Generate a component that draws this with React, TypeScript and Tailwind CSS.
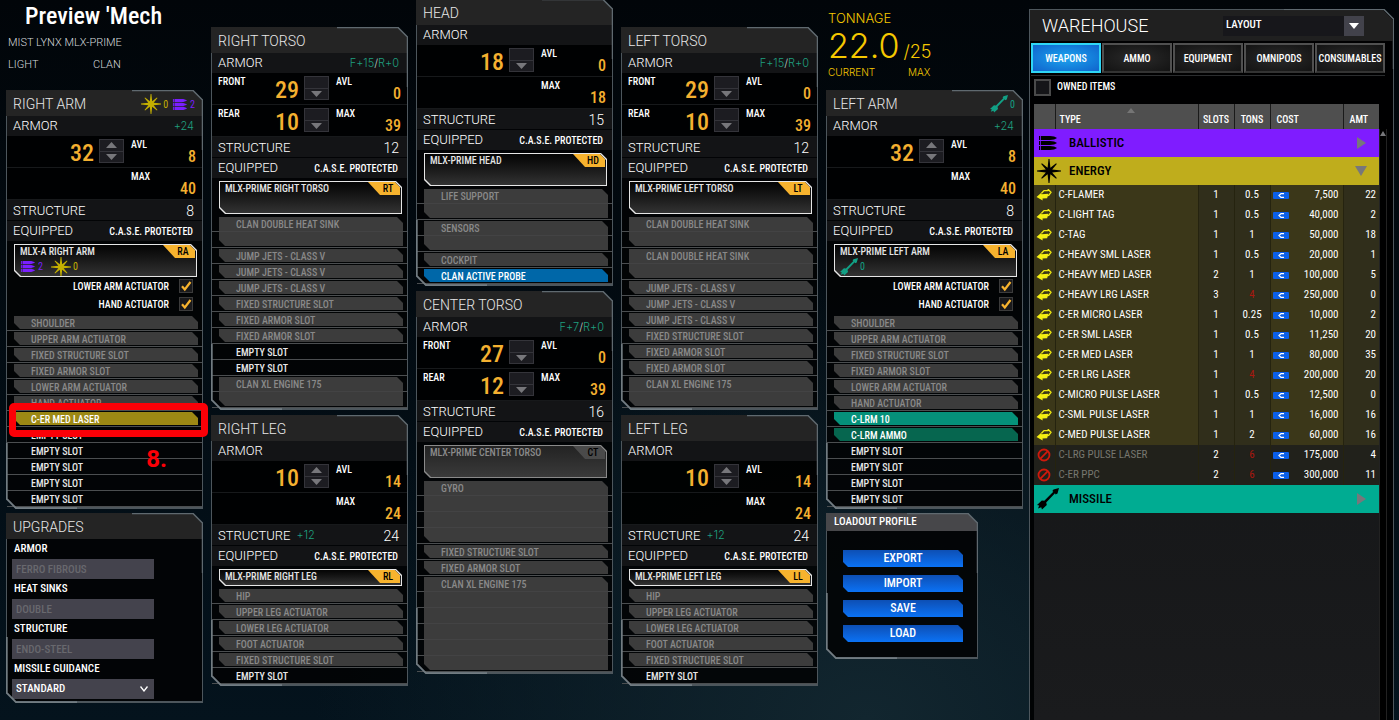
import type { ReactNode } from "react"
import clsx from "clsx"

type Hardpoint = "energy" | "ballistic" | "missile"

type Slot = {
  name: string
  size?: number
  kind?: "fixed" | "empty" | "energy" | "missile" | "ammo" | "probe"
  marked?: boolean
}

type ArmorRow = {
  label?: string
  value?: number
  canRaise?: boolean
}

type Part = {
  title: string
  code: string
  omnipod: string
  front: ArmorRow
  rear?: ArmorRow
  available: number
  max: number
  bonus?: ReactNode
  structure: number
  structureBonus?: string
  hardpoints?: { type: Hardpoint; count: number }[]
  podHardpoints?: { type: Hardpoint; count: number }[]
  actuators?: string[]
  podSize?: "small"
  locked?: boolean
  slots: Slot[]
}

const empty: Slot = { name: "EMPTY SLOT", kind: "empty" }
const jumpJets: Slot = { name: "JUMP JETS - CLASS V" }
const fixedStructure: Slot = { name: "FIXED STRUCTURE SLOT" }
const fixedArmor: Slot = { name: "FIXED ARMOR SLOT" }

const armSlots: Slot[] = [
  { name: "SHOULDER" },
  { name: "UPPER ARM ACTUATOR" },
  fixedStructure,
  fixedArmor,
  { name: "LOWER ARM ACTUATOR" },
  { name: "HAND ACTUATOR" },
]

const legSlots: Slot[] = [
  { name: "HIP" },
  { name: "UPPER LEG ACTUATOR" },
  { name: "LOWER LEG ACTUATOR" },
  { name: "FOOT ACTUATOR" },
  fixedStructure,
  empty,
]

const actuators = ["LOWER ARM ACTUATOR", "HAND ACTUATOR"]

const torsoBonus = (front: string, rear: string) => (
  <>
    F+{front}<span className="text-[#c3d0cc]">/</span>R+{rear}
  </>
)

const rightArm: Part = {
  title: "RIGHT ARM",
  code: "RA",
  omnipod: "MLX-A RIGHT ARM",
  front: { value: 32, canRaise: true },
  available: 8,
  max: 40,
  bonus: "+24",
  structure: 8,
  hardpoints: [
    { type: "energy", count: 0 },
    { type: "ballistic", count: 2 },
  ],
  podHardpoints: [
    { type: "ballistic", count: 2 },
    { type: "energy", count: 0 },
  ],
  actuators,
  slots: [
    ...armSlots,
    { name: "C-ER MED LASER", kind: "energy", marked: true },
    empty,
    empty,
    empty,
    empty,
    empty,
  ],
}

const leftArm: Part = {
  title: "LEFT ARM",
  code: "LA",
  omnipod: "MLX-PRIME LEFT ARM",
  front: { value: 32, canRaise: true },
  available: 8,
  max: 40,
  bonus: "+24",
  structure: 8,
  hardpoints: [{ type: "missile", count: 0 }],
  podHardpoints: [{ type: "missile", count: 0 }],
  actuators,
  slots: [
    ...armSlots,
    { name: "C-LRM 10", kind: "missile" },
    { name: "C-LRM AMMO", kind: "ammo" },
    empty,
    empty,
    empty,
    empty,
  ],
}

const rightTorso: Part = {
  title: "RIGHT TORSO",
  code: "RT",
  omnipod: "MLX-PRIME RIGHT TORSO",
  front: { label: "FRONT", value: 29 },
  rear: { label: "REAR", value: 10 },
  available: 0,
  max: 39,
  bonus: torsoBonus("15", "0"),
  structure: 12,
  slots: [
    { name: "CLAN DOUBLE HEAT SINK", size: 2 },
    jumpJets,
    jumpJets,
    jumpJets,
    fixedStructure,
    fixedArmor,
    fixedArmor,
    empty,
    empty,
    { name: "CLAN XL ENGINE 175", size: 2 },
  ],
}

const leftTorso: Part = {
  ...rightTorso,
  title: "LEFT TORSO",
  code: "LT",
  omnipod: "MLX-PRIME LEFT TORSO",
  slots: [
    { name: "CLAN DOUBLE HEAT SINK", size: 2 },
    { name: "CLAN DOUBLE HEAT SINK", size: 2 },
    jumpJets,
    jumpJets,
    jumpJets,
    fixedStructure,
    fixedArmor,
    fixedArmor,
    { name: "CLAN XL ENGINE 175", size: 2 },
  ],
}

const head: Part = {
  title: "HEAD",
  code: "HD",
  omnipod: "MLX-PRIME HEAD",
  front: { value: 18 },
  available: 0,
  max: 18,
  structure: 15,
  slots: [
    { name: "LIFE SUPPORT", size: 2 },
    { name: "SENSORS", size: 2 },
    { name: "COCKPIT" },
    { name: "CLAN ACTIVE PROBE", kind: "probe" },
  ],
}

const centerTorso: Part = {
  title: "CENTER TORSO",
  code: "CT",
  omnipod: "MLX-PRIME CENTER TORSO",
  front: { label: "FRONT", value: 27 },
  rear: { label: "REAR", value: 12 },
  available: 0,
  max: 39,
  bonus: torsoBonus("7", "0"),
  structure: 16,
  locked: true,
  slots: [
    { name: "GYRO", size: 4 },
    fixedStructure,
    fixedArmor,
    { name: "CLAN XL ENGINE 175", size: 6 },
  ],
}

const rightLeg: Part = {
  title: "RIGHT LEG",
  code: "RL",
  omnipod: "MLX-PRIME RIGHT LEG",
  front: { value: 10, canRaise: true },
  available: 14,
  max: 24,
  structure: 24,
  structureBonus: "+12",
  podSize: "small",
  slots: legSlots,
}

const leftLeg: Part = { ...rightLeg, title: "LEFT LEG", code: "LL", omnipod: "MLX-PRIME LEFT LEG" }

const weapons = [
  { name: "C-FLAMER", slots: 1, tons: "0.5", cost: "7,500", amt: 22 },
  { name: "C-LIGHT TAG", slots: 1, tons: "0.5", cost: "40,000", amt: 2 },
  { name: "C-TAG", slots: 1, tons: "1", cost: "50,000", amt: 18 },
  { name: "C-HEAVY SML LASER", slots: 1, tons: "0.5", cost: "20,000", amt: 1 },
  { name: "C-HEAVY MED LASER", slots: 2, tons: "1", cost: "100,000", amt: 5 },
  { name: "C-HEAVY LRG LASER", slots: 3, tons: "4", cost: "250,000", amt: 0, tooHeavy: true },
  { name: "C-ER MICRO LASER", slots: 1, tons: "0.25", cost: "10,000", amt: 2 },
  { name: "C-ER SML LASER", slots: 1, tons: "0.5", cost: "11,250", amt: 20 },
  { name: "C-ER MED LASER", slots: 1, tons: "1", cost: "80,000", amt: 35 },
  { name: "C-ER LRG LASER", slots: 1, tons: "4", cost: "200,000", amt: 20, tooHeavy: true },
  { name: "C-MICRO PULSE LASER", slots: 1, tons: "0.5", cost: "12,500", amt: 0 },
  { name: "C-SML PULSE LASER", slots: 1, tons: "1", cost: "16,000", amt: 16 },
  { name: "C-MED PULSE LASER", slots: 1, tons: "2", cost: "60,000", amt: 16 },
  { name: "C-LRG PULSE LASER", slots: 2, tons: "6", cost: "175,000", amt: 4, tooHeavy: true, blocked: true },
  { name: "C-ER PPC", slots: 2, tons: "6", cost: "300,000", amt: 11, tooHeavy: true, blocked: true },
]

const tabs = ["WEAPONS", "AMMO", "EQUIPMENT", "OMNIPODS", "CONSUMABLES"]

const slotColors = {
  fixed: "bg-[#424242]/90 text-[#898989]",
  empty: "text-[#e8e8e8]",
  energy: "bg-[#9c8814] text-white",
  missile: "bg-[#05917a] text-white",
  ammo: "bg-[#06664f] text-white",
  probe: "bg-[#0067a8] text-white",
}

const hardpointColors = {
  energy: "text-[#c4b000]",
  ballistic: "text-[#7a1fff]",
  missile: "text-[#12a085]",
}

const light = "font-['Roboto','Liberation_Sans',sans-serif] font-light"
const wide = "font-['Inter','Liberation_Sans',sans-serif] font-light"
const cut6 = "[clip-path:polygon(0_0,calc(100%-6px)_0,100%_6px,100%_100%,6px_100%,0_calc(100%-6px))]"

function EnergyIcon({ className }: { className?: string }) {
  return (
    <svg viewBox="0 0 24 24" className={className} fill="currentColor">
      <path d="M11.500 0h1l.9 8.800 5.700-4.600.7.7-4.600 5.700 8.800.9v1l-8.800.9 4.600 5.700-.7.7-5.700-4.600-.9 8.800h-1l-.9-8.800-5.700 4.600-.7-.7 4.600-5.700L0 12.500v-1l8.800-.9-4.600-5.700.7-.7 5.700 4.600z" />
    </svg>
  )
}

function BallisticIcon({ className }: { className?: string }) {
  return (
    <svg viewBox="0 0 18 14" className={className} fill="currentColor">
      {[0, 5, 10].map((y) => (
        <g key={y} transform={`translate(0 ${y})`}>
          <path d="M0 0h1.200v4H0zM2 0h9c3 0 5.500 .9 7 2-1.500 1.100-4 2-7 2H2z" />
        </g>
      ))}
    </svg>
  )
}

function MissileIcon({ className }: { className?: string }) {
  return (
    <svg viewBox="0 0 22 22" className={className} fill="currentColor">
      <path d="m22 0-1.500 5.500-2 1-.5-1.200-8.800 9.200.6 2.500L5 21.500l-.8-2.300L1 20.500l1.200-3L0 17l4.800-4.500 2.500.3 9-9-1-.8 1.200-1.500z" />
    </svg>
  )
}

function HardpointIcon({ type }: { type: Hardpoint }) {
  if (type === "energy") return <EnergyIcon className="size-5" />
  if (type === "ballistic") return <BallisticIcon className="h-[11px] w-4" />
  return <MissileIcon className="size-[18px]" />
}

function SwapIcon() {
  return (
    <svg viewBox="0 0 15 12" className="h-3 w-4">
      <path d="M5 4.200 7.500 1.600h3.800l.5-1.100 2.700 2.800-2.300 3.100-1.500.3" fill="none" stroke="#f4ee12" strokeWidth="1.300" />
      <path d="M0 8 4.800 3.700l.2 1.500 7-.5-1.400 4.500-4.600.2.200 2.200z" fill="#f4ee12" />
    </svg>
  )
}

function BlockedIcon() {
  return (
    <svg viewBox="0 0 14 14" className="h-3.5 w-4" fill="none" stroke="#d0190c" strokeWidth="1.800">
      <circle cx="7" cy="7" r="5.500" />
      <path d="m3.200 10.800 7.600-7.600" />
    </svg>
  )
}

function CreditIcon() {
  return (
    <svg viewBox="0 0 16 7" className="h-[7px] w-4">
      <rect width="16" height="7" rx="1" fill="#0a5fe8" />
      <path d="M11 1.600H8L6 3.500l2 1.900h3" fill="none" stroke="#fff" strokeWidth="1.200" />
    </svg>
  )
}

function Panel({ title, extra, children, small, className }: {
  title: string
  extra?: ReactNode
  children: ReactNode
  small?: boolean
  className?: string
}) {
  return (
    <section className={clsx("relative", className)}>
      <div className="absolute inset-0 border border-b-2 border-[#4d565c] bg-[#020304]/90 [clip-path:polygon(0_0,calc(100%-10px)_0,100%_10px,100%_100%,10px_100%,0_calc(100%-10px))]" />
      <div className="relative">
        <header
          className={clsx(
            "flex items-center [clip-path:polygon(0_0,calc(100%-10px)_0,100%_10px,100%_100%,0_100%)]",
            small ? "h-[18px] bg-[#47474a] pl-2" : "h-[26px] bg-[#242424] pt-0.5 pr-2 pl-[7px]"
          )}
        >
          <h2 className={small ? "text-[11px] font-medium" : `flex-1 text-sm text-[#e8e8e8] ${light}`}>{title}</h2>
          {extra}
        </header>
        {children}
      </div>
      <svg className="pointer-events-none absolute top-0 right-0 h-[60px] w-[71px]" fill="none" stroke="#5f696f">
        <path d="M0 .5h61l9.500 9.500v50" strokeWidth="1.500" />
      </svg>
      <svg className="pointer-events-none absolute bottom-0 left-0 h-[66px] w-[71px]" fill="none" stroke="#727c82">
        <path d="M.8 0v56l9.200 9.200h61" strokeWidth="1.800" />
      </svg>
    </section>
  )
}

function Stepper({ canRaise, name }: { canRaise?: boolean; name: string }) {
  return (
    <div className="flex h-6 w-[25px] flex-col gap-px border border-[#34343a] bg-[#34343a]">
      <button className="flex flex-1 items-center justify-center bg-[#1c1c21]" disabled={!canRaise} aria-label={`Raise ${name}`}>
        {canRaise && <svg viewBox="0 0 11 6" className="h-1.5 w-[11px]" fill="#77777b"><path d="M0 6 5.500 0 11 6z" /></svg>}
      </button>
      <button className="flex flex-1 items-center justify-center bg-[#1c1c21]" aria-label={`Lower ${name}`}>
        <svg viewBox="0 0 11 6" className="h-1.5 w-[11px]" fill="#77777b"><path d="M0 0h11L5.500 6z" /></svg>
      </button>
    </div>
  )
}

function ArmorLine({ row, name, limit, limitValue }: { row?: ArmorRow; name: string; limit: string; limitValue: number }) {
  return (
    <div className="mx-px flex h-8 border-b border-[#17191b] bg-black/60 pr-1.5 pl-1.5">
      <span className="w-9 pt-px text-[10px] leading-4 font-medium">{row?.label}</span>
      <span className="w-[45px] text-right text-2xl leading-[34px] font-medium text-[#f4b030]">{row?.value}</span>
      <div className="ml-[5px] w-[25px] pt-[3px]">
        {row && <Stepper canRaise={row.canRaise} name={`${name} ${row.label ?? ""} armor`} />}
      </div>
      <span className="ml-[7px] pt-px text-[10px] leading-4 font-medium">{limit}</span>
      <span className="ml-auto self-end text-base leading-5 font-medium text-[#f4b030]">{limitValue}</span>
    </div>
  )
}

function Hardpoints({ items, className }: { items: { type: Hardpoint; count: number }[]; className: string }) {
  return (
    <div className={clsx("flex items-center", className)}>
      {items.map((h) => (
        <span key={h.type} className={clsx("flex items-center gap-0.5 text-[10px]", hardpointColors[h.type])}>
          <HardpointIcon type={h.type} />
          {h.count}
        </span>
      ))}
    </div>
  )
}

function Omnipod({ part }: { part: Part }) {
  const stroke = part.locked ? "bg-[#8a8a8a]" : "bg-[#e6e6e6]"
  return (
    <div className={clsx("mt-[3px] mr-1.5 ml-2 p-px", cut6, stroke, part.podSize === "small" ? "h-[17px]" : "h-[33px]")}>
      <div
        className={clsx(
          "relative h-full pl-[5px]",
          cut6,
          part.locked
            ? "bg-linear-to-b from-[#232323] to-[#3a3a3a] text-[#8b8b8b]"
            : "bg-linear-to-b from-[#050505] to-[#333] text-[#e4e4e4]"
        )}
      >
        <div className="flex justify-between">
          <span className="text-[10px] leading-[14px] font-medium">{part.omnipod}</span>
          <span
            className={clsx(
              "mr-px h-[13px] w-8 pl-2 text-center text-[10px] leading-[13px] font-medium text-black [clip-path:polygon(0_0,calc(100%-5px)_0,100%_5px,100%_100%,12px_100%)]",
              part.locked ? "bg-[#4a4a4a]" : "bg-[#f7b32e]"
            )}
          >
            {part.code}
          </span>
        </div>
        {part.podHardpoints && <Hardpoints items={part.podHardpoints} className="h-4 gap-2 pb-px" />}
      </div>
    </div>
  )
}

function SlotList({ slots }: { slots: Slot[] }) {
  return (
    <ul className="mx-px bg-[repeating-linear-gradient(to_bottom,transparent_0,transparent_15px,#4b4e50_15px,#4b4e50_16px)] text-[10px] font-medium">
      {slots.map((slot, i) => (
        <li key={i} className="relative pt-px pr-1 pb-0.5 pl-[7px]" style={{ height: (slot.size ?? 1) * 16 }}>
          <div className={clsx("h-full pl-[17px] leading-[15px]", slot.kind !== "empty" && cut6, slotColors[slot.kind ?? "fixed"])}>
            {slot.name}
          </div>
          {slot.marked && (
            <>
              <span className="absolute -top-2 -right-1.5 -bottom-2.5 left-0.5 z-10 rounded-[5px] border-7 border-[#fb0007]" />
              <span className="absolute top-8 right-[35px] z-10 font-['Roboto',sans-serif] text-2xl font-bold text-[#fb0007]">8.</span>
            </>
          )}
        </li>
      ))}
    </ul>
  )
}

function PartPanel({ part }: { part: Part }) {
  return (
    <Panel
      title={part.title}
      extra={part.hardpoints && <Hardpoints items={part.hardpoints} className="gap-1" />}
      className="pb-0.5"
    >
      <div className={`mx-px flex h-5 items-center bg-[#131416] pr-2 pl-1.5 ${light}`}>
        <h3 className="flex-1 text-[13px]">ARMOR</h3>
        <span className={`text-[11px] text-[#1f9f7f] ${wide}`}>{part.bonus}</span>
      </div>
      <ArmorLine row={part.front} name={part.title} limit="AVL" limitValue={part.available} />
      <ArmorLine row={part.rear} name={part.title} limit="MAX" limitValue={part.max} />
      <div className={`mx-px mb-px flex h-5 items-center bg-[#131416] pt-px pr-2 pl-1.5 text-[13px] ${light}`}>
        <h3>STRUCTURE</h3>
        <span className={`ml-1.5 text-[11px] text-[#1f9f7f] ${wide}`}>{part.structureBonus}</span>
        <span className="ml-auto text-sm">{part.structure}</span>
      </div>
      <div className="mx-px flex h-5 items-center justify-between bg-[#131416] pr-[9px] pl-1.5">
        <h3 className={`text-[13px] ${light}`}>EQUIPPED</h3>
        <span className="text-[10px] font-medium">C.A.S.E. PROTECTED</span>
      </div>
      <Omnipod part={part} />
      {part.actuators?.map((name) => (
        <label key={name} className="flex h-[18px] items-center justify-end gap-2.5 pr-2.5 text-[10px] font-medium">
          {name}
          <span className="relative flex">
            <input type="checkbox" defaultChecked className="peer size-3.5 appearance-none border border-[#3b3b3b] bg-[#1a1a1c]" />
            <svg viewBox="0 0 12 12" className="pointer-events-none absolute inset-px hidden size-3 peer-checked:block" fill="none" stroke="#f7b32e" strokeWidth="2.200">
              <path d="m2 6.200 2.800 3.300L10.500 2" />
            </svg>
          </span>
        </label>
      ))}
      <div className="h-0.5" />
      <SlotList slots={part.slots} />
    </Panel>
  )
}

function Upgrades() {
  const fixed = [
    { id: "armor", label: "ARMOR", value: "FERRO FIBROUS" },
    { id: "heat-sinks", label: "HEAT SINKS", value: "DOUBLE" },
    { id: "structure", label: "STRUCTURE", value: "ENDO-STEEL" },
  ]
  return (
    <Panel title="UPGRADES" className="pb-1">
      <div className="pl-1.5 text-[11px] font-medium">
        {fixed.map((f) => (
          <div key={f.id} className="w-[142px]">
            <label htmlFor={f.id} className="block pl-0.5 leading-5">{f.label}</label>
            <input id={f.id} defaultValue={f.value} disabled className="block h-5 w-full bg-[#44434d] px-1 text-[#68686e]" />
          </div>
        ))}
        <div className="relative w-[142px]">
          <label htmlFor="guidance" className="block pl-0.5 leading-5">MISSILE GUIDANCE</label>
          <select id="guidance" className="block h-5 w-full appearance-none bg-[#44434d] px-1">
            <option>STANDARD</option>
          </select>
          <svg viewBox="0 0 8 6" className="pointer-events-none absolute right-1.5 bottom-[7px] h-1.5 w-2" fill="none" stroke="#fff" strokeWidth="1.300">
            <path d="m.5.5 3.500 4.500L7.500.5" />
          </svg>
        </div>
      </div>
    </Panel>
  )
}

function LoadoutProfile() {
  return (
    <Panel title="LOADOUT PROFILE" small className="w-[152px]">
      <div className="flex flex-col gap-2 pt-[19px] pr-[15px] pb-[17px] pl-[17px]">
        {["EXPORT", "IMPORT", "SAVE", "LOAD"].map((name) => (
          <button
            key={name}
            className="h-[17px] bg-linear-to-b from-[#0d4fb4] to-[#0a72f5] text-xs leading-[17px] font-medium [clip-path:polygon(0_0,calc(100%-5px)_0,100%_5px,100%_100%,5px_100%,0_calc(100%-5px))]"
          >
            {name}
          </button>
        ))}
      </div>
    </Panel>
  )
}

function CategoryRow({ name, color, icon, open }: { name: string; color: string; icon: ReactNode; open?: boolean }) {
  return (
    <tr className={clsx("h-7 text-black", color)}>
      <th colSpan={6} scope="rowgroup" className="p-0">
        <button className="flex w-full items-center pr-3 pl-[3px] text-[13px] font-medium">
          <span className="flex w-8 justify-start">{icon}</span>
          <span className="flex-1 text-left">{name}</span>
          <svg viewBox="0 0 12 12" className="size-3" fill="#77777b">
            <path d={open ? "M0 1h12L6 11z" : "M2 0v12l9-6z"} />
          </svg>
        </button>
      </th>
    </tr>
  )
}

function Warehouse() {
  return (
    <aside className="relative mt-[9px] flex w-[365px] shrink-0 flex-col">
      <div className="absolute inset-0 border border-b-0 border-[#4d565c] bg-black/90 [clip-path:polygon(0_0,calc(100%-10px)_0,100%_10px,100%_100%,0_100%)]" />
      <svg className="pointer-events-none absolute top-0 right-0 h-[60px] w-[110px]" fill="none" stroke="#5f696f">
        <path d="M0 .5h100l9.500 9.500v50" strokeWidth="1.500" />
      </svg>
      <div className="relative flex flex-1 flex-col">
        <header className="mx-px mt-px flex h-[31px] items-center bg-[#242424]/90 pr-[29px] pl-3 [clip-path:polygon(0_0,calc(100%-10px)_0,100%_10px,100%_100%,0_100%)]">
          <h2 className={`flex-1 text-lg ${light}`}>WAREHOUSE</h2>
          <div className="relative w-[141px]">
            <select aria-label="Layout" className="block h-5 w-full appearance-none bg-[#17171b] px-[3px] text-[11px] font-medium">
              <option>LAYOUT</option>
            </select>
            <span className="pointer-events-none absolute inset-y-0 right-0 flex w-5 items-center justify-center bg-[#42424b]">
              <svg viewBox="0 0 10 6" className="h-1.5 w-2.5" fill="#fff"><path d="M0 0h10L5 6z" /></svg>
            </span>
          </div>
        </header>
        <nav className="mr-[9px] ml-0.5 flex gap-px border-b border-[#2a2c2e] py-0.5">
          {tabs.map((tab, i) => (
            <button
              key={tab}
              className={clsx(
                "h-[30px] min-w-0 flex-1 border-2 text-[10px] font-medium",
                i === 0
                  ? "border-[#2fd6f5] bg-radial from-[#1fa4ee] to-[#1263cc]"
                  : "border-[#505050] border-b-[#333] bg-radial from-[#2b2b2b] to-[#131313]"
              )}
            >
              {tab}
            </button>
          ))}
        </nav>
        <label className="mt-[3px] flex items-center gap-1.5 pl-[5px] text-[10px] font-medium">
          <input type="checkbox" className="size-[17px] appearance-none border-2 border-[#4a4a4a] bg-[#151518]" />
          <span className="pb-0.5">OWNED ITEMS</span>
        </label>
        <div className="mt-2 ml-[5px] flex flex-1">
          <div className="flex-1 bg-linear-to-b from-[#111213] to-[#1a1b1d]">
            <table className="w-full table-fixed border-collapse text-[11px]">
              <colgroup>
                <col className="w-[21px]" />
                <col />
                <col className="w-9" />
                <col className="w-9" />
                <col className="w-[73px]" />
                <col className="w-9" />
              </colgroup>
              <thead>
                <tr className="h-[25px] bg-[#4f4f4f] text-left align-bottom text-[10px]">
                  <td className="border-r border-[#1a1a1a]" />
                  <th className="relative border-r border-[#1a1a1a] p-0 pb-0.5 pl-1 font-medium">
                    TYPE
                    <svg viewBox="0 0 8 5" className="absolute top-1 left-1/2 h-[5px] w-2" fill="#757575"><path d="M0 5 4 0l4 5z" /></svg>
                  </th>
                  <th className="border-r border-[#1a1a1a] p-0 pb-0.5 text-center font-medium">SLOTS</th>
                  <th className="border-r border-[#1a1a1a] p-0 pb-0.5 text-center font-medium">TONS</th>
                  <th className="border-r border-[#1a1a1a] p-0 pb-0.5 pl-1.5 font-medium">COST</th>
                  <th className="p-0 pb-0.5 pl-1.5 font-medium">AMT</th>
                </tr>
              </thead>
              <tbody>
                <CategoryRow name="BALLISTIC" color="bg-[#7f1cff]" icon={<BallisticIcon className="ml-0.5 h-3.5 w-[18px]" />} />
                <CategoryRow name="ENERGY" color="bg-[#bfad1c]" icon={<EnergyIcon className="size-6" />} open />
                {weapons.map((w) => (
                  <tr key={w.name} className={clsx("h-5", w.blocked ? "bg-[#21211b]" : "bg-[#3b3719]")}>
                    <td className="border-r border-[#25230f] p-0 pl-0.5">{w.blocked ? <BlockedIcon /> : <SwapIcon />}</td>
                    <td className={clsx("border-r border-[#25230f] p-0 pl-[3px]", w.blocked && "text-[#77776f]")}>{w.name}</td>
                    <td className={clsx("border-r border-[#25230f] p-0 text-center", !w.blocked && "bg-[#302e1b]")}>{w.slots}</td>
                    <td className={clsx("border-r border-[#25230f] p-0 text-center", !w.blocked && "bg-[#302e1b]", w.tooHeavy && "text-[#a8180f]")}>{w.tons}</td>
                    <td className="border-r border-[#25230f] p-0">
                      <div className="flex items-center justify-between pr-1 pl-0.5">
                        <CreditIcon />
                        {w.cost}
                      </div>
                    </td>
                    <td className={clsx("p-0 pr-[3px] text-right", !w.blocked && "bg-[#302e1b]")}>{w.amt}</td>
                  </tr>
                ))}
                <CategoryRow name="MISSILE" color="bg-[#00ac92]" icon={<MissileIcon className="size-[22px]" />} />
              </tbody>
            </table>
          </div>
          <div className="mt-[25px] mr-[7px] flex w-2 justify-center border-x border-[#222] bg-black pt-0.5">
            <svg viewBox="0 0 6 5" className="h-[5px] w-1.5 shrink-0" fill="#77777b"><path d="M0 5 3 0l3 5z" /></svg>
          </div>
        </div>
      </div>
    </aside>
  )
}

export default function App() {
  return (
    <div className="flex min-h-screen gap-1.5 overflow-hidden bg-[#02080e] bg-[radial-gradient(ellipse_at_62%_100%,#12262f_0,transparent_45%),linear-gradient(to_bottom,#010509,#04131d)] pr-[5px] pl-1.5 font-['Roboto_Condensed','Liberation_Sans_Narrow',sans-serif] text-white">
      <main className="flex min-w-0 flex-1 gap-2">
        <div className="flex min-w-0 flex-1 flex-col gap-1">
          <div className="h-[86px]">
            <h1 className="pl-[19px] text-2xl leading-8 font-medium">Preview 'Mech</h1>
            <div className={`pl-0.5 text-[11px] leading-[22px] text-[#d5d9dc] ${light}`}>
              <p>MIST LYNX MLX-PRIME</p>
              <p className="flex">
                <span className="w-[85px]">LIGHT</span>
                <span>CLAN</span>
              </p>
            </div>
          </div>
          <PartPanel part={rightArm} />
          <Upgrades />
        </div>
        <div className="flex min-w-0 flex-1 flex-col gap-[5px] pt-[27px]">
          <PartPanel part={rightTorso} />
          <PartPanel part={rightLeg} />
        </div>
        <div className="-mt-px flex min-w-0 flex-1 flex-col gap-[5px]">
          <PartPanel part={head} />
          <PartPanel part={centerTorso} />
        </div>
        <div className="flex min-w-0 flex-1 flex-col gap-[5px] pt-[27px]">
          <PartPanel part={leftTorso} />
          <PartPanel part={leftLeg} />
        </div>
        <div className="flex min-w-0 flex-1 flex-col gap-1">
          <div className={`flex h-[86px] flex-col pt-2.5 pl-0.5 text-[#f5c800] ${wide}`}>
            <p className="text-[13px] leading-4">TONNAGE</p>
            <p className="flex items-baseline gap-1 leading-10">
              <span className="text-[34px]">22.0</span>
              <span className="text-lg">/25</span>
            </p>
            <p className="flex text-[10px] leading-3">
              <span className="w-20">CURRENT</span>
              <span>MAX</span>
            </p>
          </div>
          <PartPanel part={leftArm} />
          <LoadoutProfile />
        </div>
      </main>
      <Warehouse />
    </div>
  )
}
